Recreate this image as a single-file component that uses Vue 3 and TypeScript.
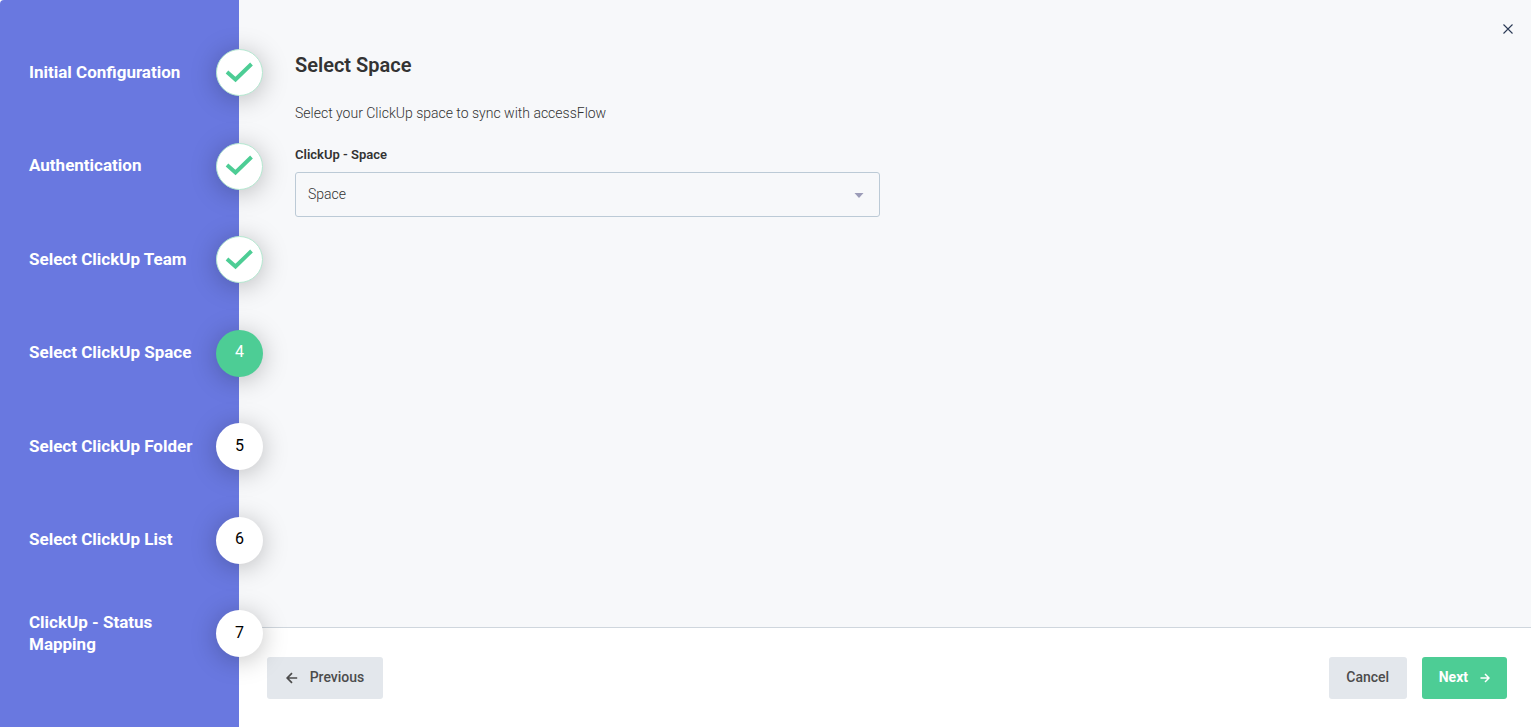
<script setup lang="ts">
import { ref } from 'vue'

interface Step {
  id: number
  label: string
}

const steps: Step[] = [
  { id: 1, label: 'Initial Configuration' },
  { id: 2, label: 'Authentication' },
  { id: 3, label: 'Select ClickUp Team' },
  { id: 4, label: 'Select ClickUp Space' },
  { id: 5, label: 'Select ClickUp Folder' },
  { id: 6, label: 'Select ClickUp List' },
  { id: 7, label: 'ClickUp - Status Mapping' },
]

const current = ref(4)
const space = ref('')

function stepState(step: Step): string {
  if (step.id < current.value) return 'done'
  return step.id === current.value ? 'active' : 'upcoming'
}
</script>

<template>
  <div class="wizard">
    <nav class="sidebar" aria-label="Setup steps">
      <ol class="steps">
        <li
          v-for="step in steps"
          :key="step.id"
          class="step"
          :class="stepState(step)"
          :aria-current="step.id === current ? 'step' : undefined"
        >
          <span class="step-label">{{ step.label }}</span>
          <span class="marker">
            <svg v-if="step.id < current" width="29" height="22" viewBox="0 0 29 22" aria-hidden="true">
              <path d="M2 10 L10.5 17.5 L26.5 2" fill="none" stroke="#4dcd95" stroke-width="3.9" />
            </svg>
            <span v-else class="number">{{ step.id }}</span>
          </span>
        </li>
      </ol>
    </nav>

    <div class="panel">
      <main class="content">
        <button class="close" type="button" aria-label="Close">
          <svg width="10" height="10" viewBox="0 0 10 10" aria-hidden="true">
            <path d="M0.5 0.5 L9.5 9.5 M9.5 0.5 L0.5 9.5" fill="none" stroke="#2b3a55" stroke-width="1.1" />
          </svg>
        </button>
        <h1 class="title">Select Space</h1>
        <p class="intro">Select your ClickUp space to sync with accessFlow</p>
        <label class="field-label" for="space">ClickUp - Space</label>
        <div class="select-box">
          <select id="space" v-model="space">
            <option value="" disabled>Space</option>
          </select>
          <svg class="caret" width="10" height="5" viewBox="0 0 10 5" aria-hidden="true">
            <path d="M0.5 0 H9.5 L5 5 Z" fill="#9c9cb8" />
          </svg>
        </div>
      </main>

      <footer class="footer">
        <button class="btn previous" type="button">
          <svg width="12" height="12" viewBox="0 0 12 12" aria-hidden="true">
            <path d="M11.2 6 H1.6 M6 1.2 L1.2 6 L6 10.8" fill="none" stroke="#4c4c4c" stroke-width="1.7" />
          </svg>
          <span class="btn-text">Previous</span>
        </button>
        <div class="actions">
          <button class="btn cancel" type="button"><span class="btn-text">Cancel</span></button>
          <button class="btn next" type="button">
            <span class="btn-text">Next</span>
            <svg width="10" height="10" viewBox="0 0 10 10" aria-hidden="true">
              <path d="M0.5 5 H9 M5 1 L9 5 L5 9" fill="none" stroke="#fff" stroke-width="1.5" />
            </svg>
          </button>
        </div>
      </footer>
    </div>
  </div>
</template>

<style>
body {
  margin: 0;
  background: #fff;
}
</style>

<style scoped>
.wizard {
  display: flex;
  min-height: 100vh;
  font-family: Roboto, 'Liberation Sans', sans-serif;
  color: #333;
}

.sidebar {
  position: relative;
  z-index: 1;
  display: flex;
  flex: 0 0 239px;
  box-sizing: border-box;
  padding: 49px 0 70px 29px;
  background: #6978e0;
  border-radius: 4px 0 0 0;
}

.steps {
  display: flex;
  flex: 1;
  flex-direction: column;
  justify-content: space-between;
  margin: 0 -24px 0 0;
  padding: 0;
  list-style: none;
}

.step {
  display: flex;
  align-items: center;
  justify-content: space-between;
  height: 47px;
}

.step-label {
  width: 176px;
  padding-bottom: 2px;
  font-size: 17px;
  font-weight: 700;
  line-height: 22px;
  color: #fff;
}

.marker {
  display: flex;
  flex: 0 0 47px;
  align-items: center;
  justify-content: center;
  box-sizing: border-box;
  height: 47px;
  border-radius: 50%;
  background: #fff;
  box-shadow: 0 3px 26px rgba(0, 0, 0, 0.25);
  font-size: 16px;
  line-height: 20px;
  color: #000;
}

.number {
  padding-bottom: 2px;
}

.done .marker {
  border: 1px solid #b5e8d1;
}

.active .marker {
  background: #4dcd95;
  color: #fff;
}

.panel {
  display: flex;
  flex: 1;
  flex-direction: column;
  min-width: 0;
}

.content {
  position: relative;
  flex: 1;
  padding: 52px 56px 24px;
  background: #f7f8fa;
}

.close {
  position: absolute;
  top: 18px;
  right: 12px;
  display: flex;
  padding: 6px;
  border: 0;
  background: none;
  cursor: pointer;
}

.title {
  margin: 0;
  font-size: 20px;
  font-weight: 600;
  line-height: 26px;
}

.intro {
  margin: 25px 0 22px;
  font-size: 14px;
  font-weight: 300;
  line-height: 20px;
}

.field-label {
  display: block;
  margin-bottom: 8px;
  font-size: 13px;
  font-weight: 600;
  line-height: 19px;
}

.select-box {
  position: relative;
  max-width: 585px;
}

select {
  display: block;
  box-sizing: border-box;
  width: 100%;
  height: 45px;
  padding: 0 36px 2px 12px;
  border: 1px solid #bccad6;
  border-radius: 3px;
  background: transparent;
  appearance: none;
  font: 300 14px/20px Roboto, 'Liberation Sans', sans-serif;
  color: #333;
}

.caret {
  position: absolute;
  top: 21px;
  right: 16px;
  pointer-events: none;
}

.footer {
  display: flex;
  align-items: center;
  justify-content: space-between;
  padding: 29px 24px 28px 28px;
  border-top: 1px solid #cfd6dd;
  background: #fff;
}

.actions {
  display: flex;
  gap: 15px;
}

.btn {
  display: flex;
  align-items: center;
  justify-content: center;
  height: 42px;
  padding: 0 17px;
  border: 0;
  border-radius: 3px;
  background: #e3e7ec;
  color: #4c4c4c;
  font: 500 14px/20px Roboto, 'Liberation Sans', sans-serif;
  cursor: pointer;
}

.btn-text {
  padding-bottom: 2px;
}

.previous {
  gap: 12px;
  min-width: 116px;
}

.cancel {
  min-width: 78px;
}

.next {
  gap: 12px;
  min-width: 85px;
  background: #4dcd95;
  color: #fff;
  font-weight: 700;
}
</style>
